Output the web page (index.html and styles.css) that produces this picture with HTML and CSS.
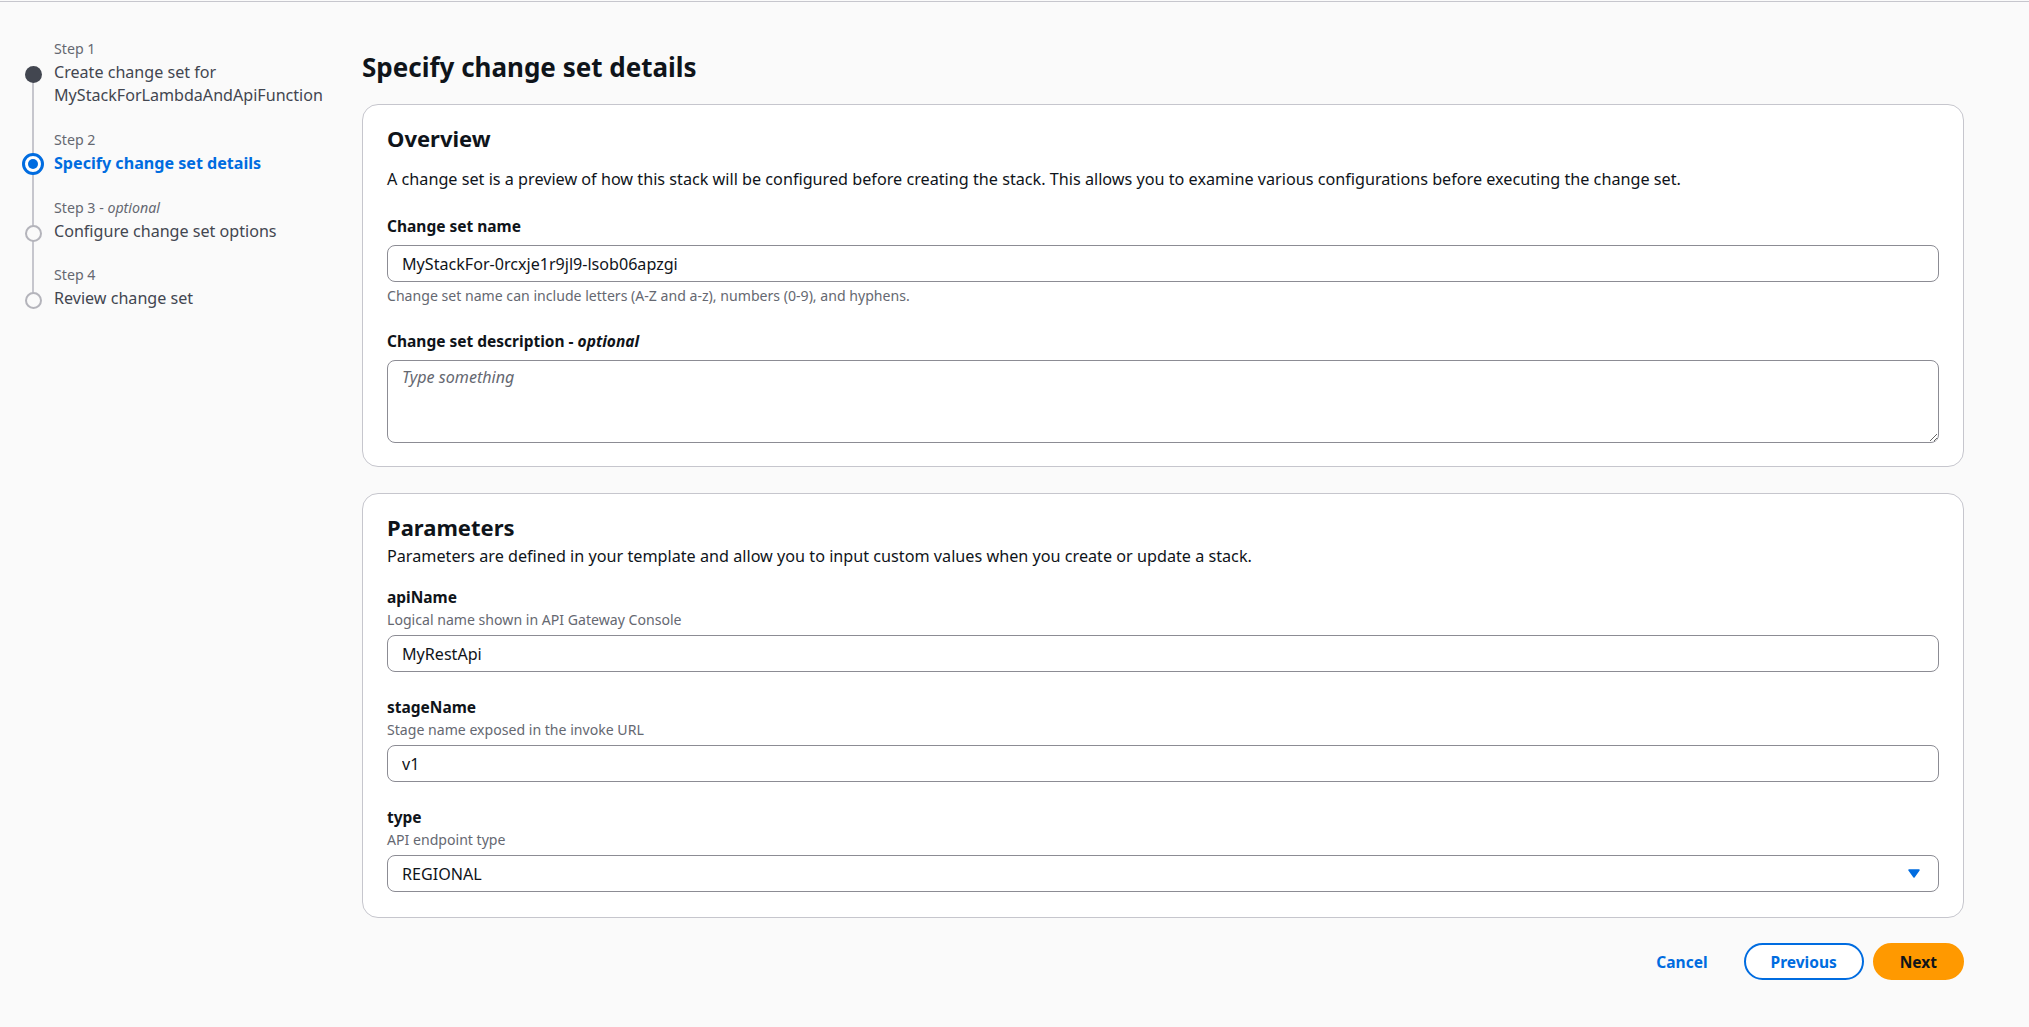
FILE: index.html
```html
<!DOCTYPE html>
<html lang="en">
<head>
<meta charset="utf-8">
<title>Specify change set details</title>
<link rel="stylesheet" href="styles.css">
</head>
<body>
<div class="page">
  <nav class="wizard-nav">
    <ol class="steps">
      <li class="step">
        <span class="step-label">Step 1</span>
        <span class="step-dot dot-done"></span>
        <span class="step-title">Create change set for MyStackForLambdaAndApiFunction</span>
      </li>
      <li class="step">
        <span class="step-label">Step 2</span>
        <span class="step-dot dot-active"></span>
        <span class="step-title title-active">Specify change set details</span>
      </li>
      <li class="step">
        <span class="step-label">Step 3 - <i>optional</i></span>
        <span class="step-dot dot-todo"></span>
        <span class="step-title">Configure change set options</span>
      </li>
      <li class="step">
        <span class="step-label">Step 4</span>
        <span class="step-dot dot-todo"></span>
        <span class="step-title">Review change set</span>
      </li>
    </ol>
  </nav>
  <main class="main">
    <h1 class="page-title">Specify change set details</h1>

    <section class="card overview">
      <h2 class="card-title">Overview</h2>
      <p class="card-desc">A change set is a preview of how this stack will be configured before creating the stack. This allows you to examine various configurations before executing the change set.</p>
      <div class="fields">
        <div class="field">
          <label class="field-label" for="csname">Change set name</label>
          <input class="input control" id="csname" type="text" value="MyStackFor-0rcxje1r9jl9-lsob06apzgi">
          <p class="constraint">Change set name can include letters (A-Z and a-z), numbers (0-9), and hyphens.</p>
        </div>
        <div class="field">
          <label class="field-label" for="csdesc">Change set description - <i>optional</i></label>
          <textarea class="textarea control" id="csdesc" placeholder="Type something"></textarea>
        </div>
      </div>
    </section>

    <section class="card params">
      <h2 class="card-title">Parameters</h2>
      <p class="card-desc">Parameters are defined in your template and allow you to input custom values when you create or update a stack.</p>
      <div class="fields">
        <div class="field">
          <label class="field-label" for="apiName">apiName</label>
          <span class="field-desc">Logical name shown in API Gateway Console</span>
          <input class="input control" id="apiName" type="text" value="MyRestApi">
        </div>
        <div class="field">
          <label class="field-label" for="stageName">stageName</label>
          <span class="field-desc">Stage name exposed in the invoke URL</span>
          <input class="input control" id="stageName" type="text" value="v1">
        </div>
        <div class="field">
          <span class="field-label">type</span>
          <span class="field-desc">API endpoint type</span>
          <div class="select control">
            <span class="select-value">REGIONAL</span>
            <svg class="caret" width="12" height="9" viewBox="0 0 12 9" aria-hidden="true"><polygon points="1,1 11,1 6,8" fill="#006ce0" stroke="#006ce0" stroke-width="1.5" stroke-linejoin="round"/></svg>
          </div>
        </div>
      </div>
    </section>

    <div class="actions">
      <button class="btn btn-link" type="button">Cancel</button>
      <button class="btn btn-normal" type="button">Previous</button>
      <button class="btn btn-primary" type="button">Next</button>
    </div>
  </main>
</div>
</body>
</html>
```

FILE: styles.css
```css
* {
  box-sizing: border-box;
}

html,
body {
  margin: 0;
  padding: 0;
}

body {
  background: #fafafa;
  font-family: "Noto Sans", "Open Sans", "Liberation Sans", Arial, sans-serif;
  color: #0f141a;
  padding-top: 1px;
}

.page {
  border-top: 1px solid #c6c6cd;
  display: grid;
  grid-template-columns: 362px 1fr;
  padding-right: 65px;
}

/* ---------- wizard navigation ---------- */
.wizard-nav {
  padding: 37px 0 0 20px;
}

.steps {
  list-style: none;
  margin: 0;
  padding: 0;
  display: flex;
  flex-direction: column;
  gap: 22.5px;
}

.step {
  position: relative;
  display: grid;
  grid-template-columns: 26px 1fr;
  column-gap: 8px;
  grid-template-areas:
    ". label"
    "dot title";
}

.step:not(:last-child)::after {
  content: "";
  position: absolute;
  left: 12px;
  width: 2px;
  top: 35px;
  bottom: -57.5px;
  background: #c6c6cd;
}

.step-label {
  grid-area: label;
  font-size: 14.2px;
  line-height: 20px;
  color: #656871;
  margin-bottom: 2px;
}

.step-title {
  grid-area: title;
  font-size: 16.1px;
  line-height: 23px;
  color: #424650;
}

.title-active {
  color: #006ce0;
  font-weight: 700;
}

.step-dot {
  grid-area: dot;
  position: relative;
  z-index: 1;
  justify-self: center;
  align-self: start;
  border-radius: 50%;
}

.dot-done {
  width: 17px;
  height: 17px;
  margin-top: 4.5px;
  background: #424650;
}

.dot-todo {
  width: 17px;
  height: 17px;
  margin-top: 5px;
  border: 2px solid #b4b4bb;
  background: #fafafa;
}

.dot-active {
  width: 22px;
  height: 22px;
  margin-top: 1.5px;
  border: 3px solid #006ce0;
  background: #ffffff;
  display: flex;
  align-items: center;
  justify-content: center;
}

.dot-active::after {
  content: "";
  width: 10px;
  height: 10px;
  border-radius: 50%;
  background: #006ce0;
}

/* ---------- main ---------- */
.main {
  padding-top: 49px;
  min-width: 0;
}

.page-title {
  margin: 0 0 21px;
  font-size: 26px;
  line-height: 32px;
  font-weight: 700;
}

.card {
  background: #ffffff;
  border: 1px solid #c6c6cd;
  border-radius: 16px;
  padding: 19px 24px 23px;
}

.card + .card {
  margin-top: 26px;
}

.params {
  padding-bottom: 25px;
}

.card-title {
  margin: 0;
  font-size: 22px;
  line-height: 28px;
  font-weight: 700;
}

.overview .card-title {
  margin-bottom: 15px;
}

.card-desc {
  margin: 0;
  font-size: 16.2px;
  line-height: 24px;
}

.params .card-desc {
  margin-top: 3px;
}

.fields {
  display: flex;
  flex-direction: column;
  gap: 24px;
  margin-top: 24px;
}

.params .fields {
  margin-top: 18px;
}

.field {
  display: flex;
  flex-direction: column;
}

.field-label {
  font-size: 15.5px;
  line-height: 22px;
  font-weight: 700;
}

.field-desc {
  margin-top: 1.5px;
  font-size: 14.1px;
  line-height: 20px;
  color: #656871;
}

.control {
  margin-top: 5.5px;
}

.overview .control {
  margin-top: 8px;
}

.input {
  display: block;
  width: 100%;
  height: 37px;
  border: 1px solid #8c8c94;
  border-radius: 8px;
  padding: 0 14px;
  background: #ffffff;
  font-family: inherit;
  font-size: 16.1px;
  color: #0f141a;
  outline: none;
}

.constraint {
  margin: 4px 0 0;
  font-size: 14.1px;
  line-height: 20px;
  color: #656871;
}

.textarea {
  display: block;
  width: 100%;
  height: 83px;
  border: 1px solid #8c8c94;
  border-radius: 8px;
  padding: 4px 14px;
  background: #ffffff;
  font-family: inherit;
  font-size: 16.1px;
  line-height: 24px;
  color: #0f141a;
  outline: none;
}

.textarea::placeholder {
  color: #656871;
  font-style: italic;
}

.select {
  height: 37px;
  border: 1px solid #8c8c94;
  border-radius: 8px;
  padding: 0 18px 0 14px;
  background: #ffffff;
  display: flex;
  align-items: center;
  justify-content: space-between;
  font-size: 16.1px;
}

.caret {
  display: block;
}

/* ---------- actions ---------- */
.actions {
  display: flex;
  justify-content: flex-end;
  gap: 9px;
  margin-top: 25px;
}

.btn {
  height: 37px;
  padding: 0 25px;
  border-radius: 20px;
  border: 2px solid transparent;
  background: transparent;
  font-family: inherit;
  font-size: 15.5px;
  font-weight: 700;
  line-height: 20px;
  cursor: pointer;
}

.btn-link {
  color: #006ce0;
}

.btn-normal {
  border-color: #006ce0;
  color: #006ce0;
  background: #ffffff;
}

.btn-primary {
  background: #ff9900;
  border-color: #ff9900;
  color: #0f141a;
}
```
